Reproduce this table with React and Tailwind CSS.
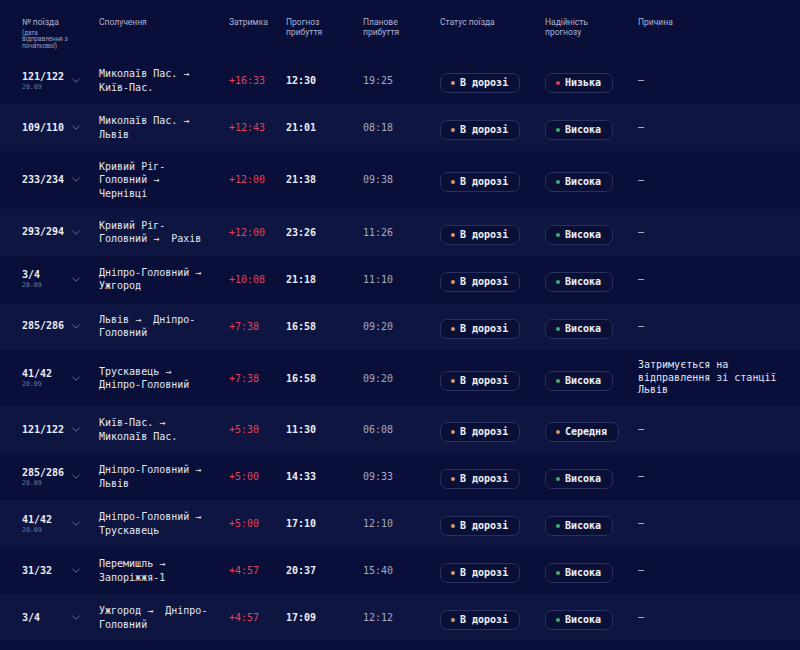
import React from "react";

const MONO = { fontFamily: '"DejaVu Sans Mono", "Liberation Mono", monospace' };

const dotColors = {
  red: "bg-[#d9435d]",
  green: "bg-[#3fae78]",
  orange: "bg-[#d9966a]",
};

const trains = [
  { num: "121/122", date: "20.09", from: "Миколаїв Пас.", to: "Київ-Пас.", delay: "+16:33", eta: "12:30", plan: "19:25", rel: "Низька", relDot: "red" },
  { num: "109/110", from: "Миколаїв Пас.", to: "Львів", delay: "+12:43", eta: "21:01", plan: "08:18", rel: "Висока", relDot: "green" },
  { num: "233/234", from: "Кривий Ріг-Головний", to: "Чернівці", delay: "+12:00", eta: "21:38", plan: "09:38", rel: "Висока", relDot: "green" },
  { num: "293/294", from: "Кривий Ріг-Головний", to: "Рахів", delay: "+12:00", eta: "23:26", plan: "11:26", rel: "Висока", relDot: "green" },
  { num: "3/4", date: "20.09", from: "Дніпро-Головний", to: "Ужгород", delay: "+10:08", eta: "21:18", plan: "11:10", rel: "Висока", relDot: "green" },
  { num: "285/286", from: "Львів", to: "Дніпро-Головний", delay: "+7:38", eta: "16:58", plan: "09:20", rel: "Висока", relDot: "green" },
  { num: "41/42", date: "20.09", from: "Трускавець", to: "Дніпро-Головний", delay: "+7:38", eta: "16:58", plan: "09:20", rel: "Висока", relDot: "green", reason: "Затримується на відправлення зі станції Львів" },
  { num: "121/122", from: "Київ-Пас.", to: "Миколаїв Пас.", delay: "+5:30", eta: "11:30", plan: "06:08", rel: "Середня", relDot: "orange" },
  { num: "285/286", date: "20.09", from: "Дніпро-Головний", to: "Львів", delay: "+5:00", eta: "14:33", plan: "09:33", rel: "Висока", relDot: "green" },
  { num: "41/42", date: "20.09", from: "Дніпро-Головний", to: "Трускавець", delay: "+5:00", eta: "17:10", plan: "12:10", rel: "Висока", relDot: "green" },
  { num: "31/32", from: "Перемишль", to: "Запоріжжя-1", delay: "+4:57", eta: "20:37", plan: "15:40", rel: "Висока", relDot: "green" },
  { num: "3/4", from: "Ужгород", to: "Дніпро-Головний", delay: "+4:57", eta: "17:09", plan: "12:12", rel: "Висока", relDot: "green" },
];

const COLS = "grid grid-cols-[77px_130px_57px_77px_77px_105px_93px_150px] pl-[22px]";

function Pill({ dot, children }) {
  return (
    <span className="inline-flex items-center h-[20px] rounded-[7px] border border-[#283062] bg-[#0a1035] pl-[10px] pr-[11px]">
      <span className={`w-[4px] h-[4px] rounded-full ${dotColors[dot]}`} />
      <span className="ml-[5px] text-[10px] font-bold text-[#eef0f8] leading-none">{children}</span>
    </span>
  );
}

function Chevron() {
  return (
    <svg width="8" height="5" viewBox="0 0 8 5" fill="none" className="text-[#6e769c]">
      <path d="M0.5 0.8 L4 4.2 L7.5 0.8" stroke="currentColor" strokeWidth="0.9" />
    </svg>
  );
}

function Row({ t, odd }) {
  return (
    <div className={`${COLS} items-center min-h-[47px] py-[9px] ${odd ? "bg-[#0e1540]" : ""}`} style={MONO}>
      <div className="flex items-center">
        <div className="w-[50px] flex flex-col">
          <span className="text-[10px] font-bold text-[#eceef8] leading-[12px]">{t.num}</span>
          {t.date && <span className="text-[6.5px] text-[#6f7699] leading-[8px]">{t.date}</span>}
        </div>
        <Chevron />
      </div>
      <div className="max-w-[110px] text-[10px] leading-[13.3px] text-[#e4e7f4]">
        {t.from} →{"\u00a0"} {t.to}
      </div>
      <div className="text-[10px] text-[#dc4560]">{t.delay}</div>
      <div className="text-[10px] font-bold text-[#eef0f8]">{t.eta}</div>
      <div className="text-[10px] text-[#a4aac6]">{t.plan}</div>
      <div>
        <Pill dot="orange">В дорозі</Pill>
      </div>
      <div>
        <Pill dot={t.relDot}>{t.rel}</Pill>
      </div>
      <div className="text-[10px] leading-[12.8px] text-[#e4e7f4]">
        {t.reason ? t.reason : <span className="text-[#c9cde2]">—</span>}
      </div>
    </div>
  );
}

export default function App() {
  return (
    <div className="min-h-screen w-[800px] h-[650px] overflow-hidden bg-[#090f38]">
      <div
        className={`${COLS} pt-[18px] h-[57px] text-[8.5px] leading-[9.5px] text-[#aeb4d4]`}
        style={{ fontFamily: 'Roboto, "Noto Sans", sans-serif' }}
      >
        <div>
          <div>№ поїзда</div>
          <div className="mt-[2px] max-w-[52px] text-[6.3px] leading-[6.6px] text-[#9aa1c4]">
            (дата відправлення з початкової)
          </div>
        </div>
        <div>Сполучення</div>
        <div>Затримка</div>
        <div className="max-w-[45px]">Прогноз прибуття</div>
        <div className="max-w-[45px]">Планове прибуття</div>
        <div>Статус поїзда</div>
        <div className="max-w-[55px]">Надійність прогнозу</div>
        <div>Причина</div>
      </div>
      {trains.map((t, i) => (
        <Row key={i} t={t} odd={i % 2 === 1} />
      ))}
    </div>
  );
}
